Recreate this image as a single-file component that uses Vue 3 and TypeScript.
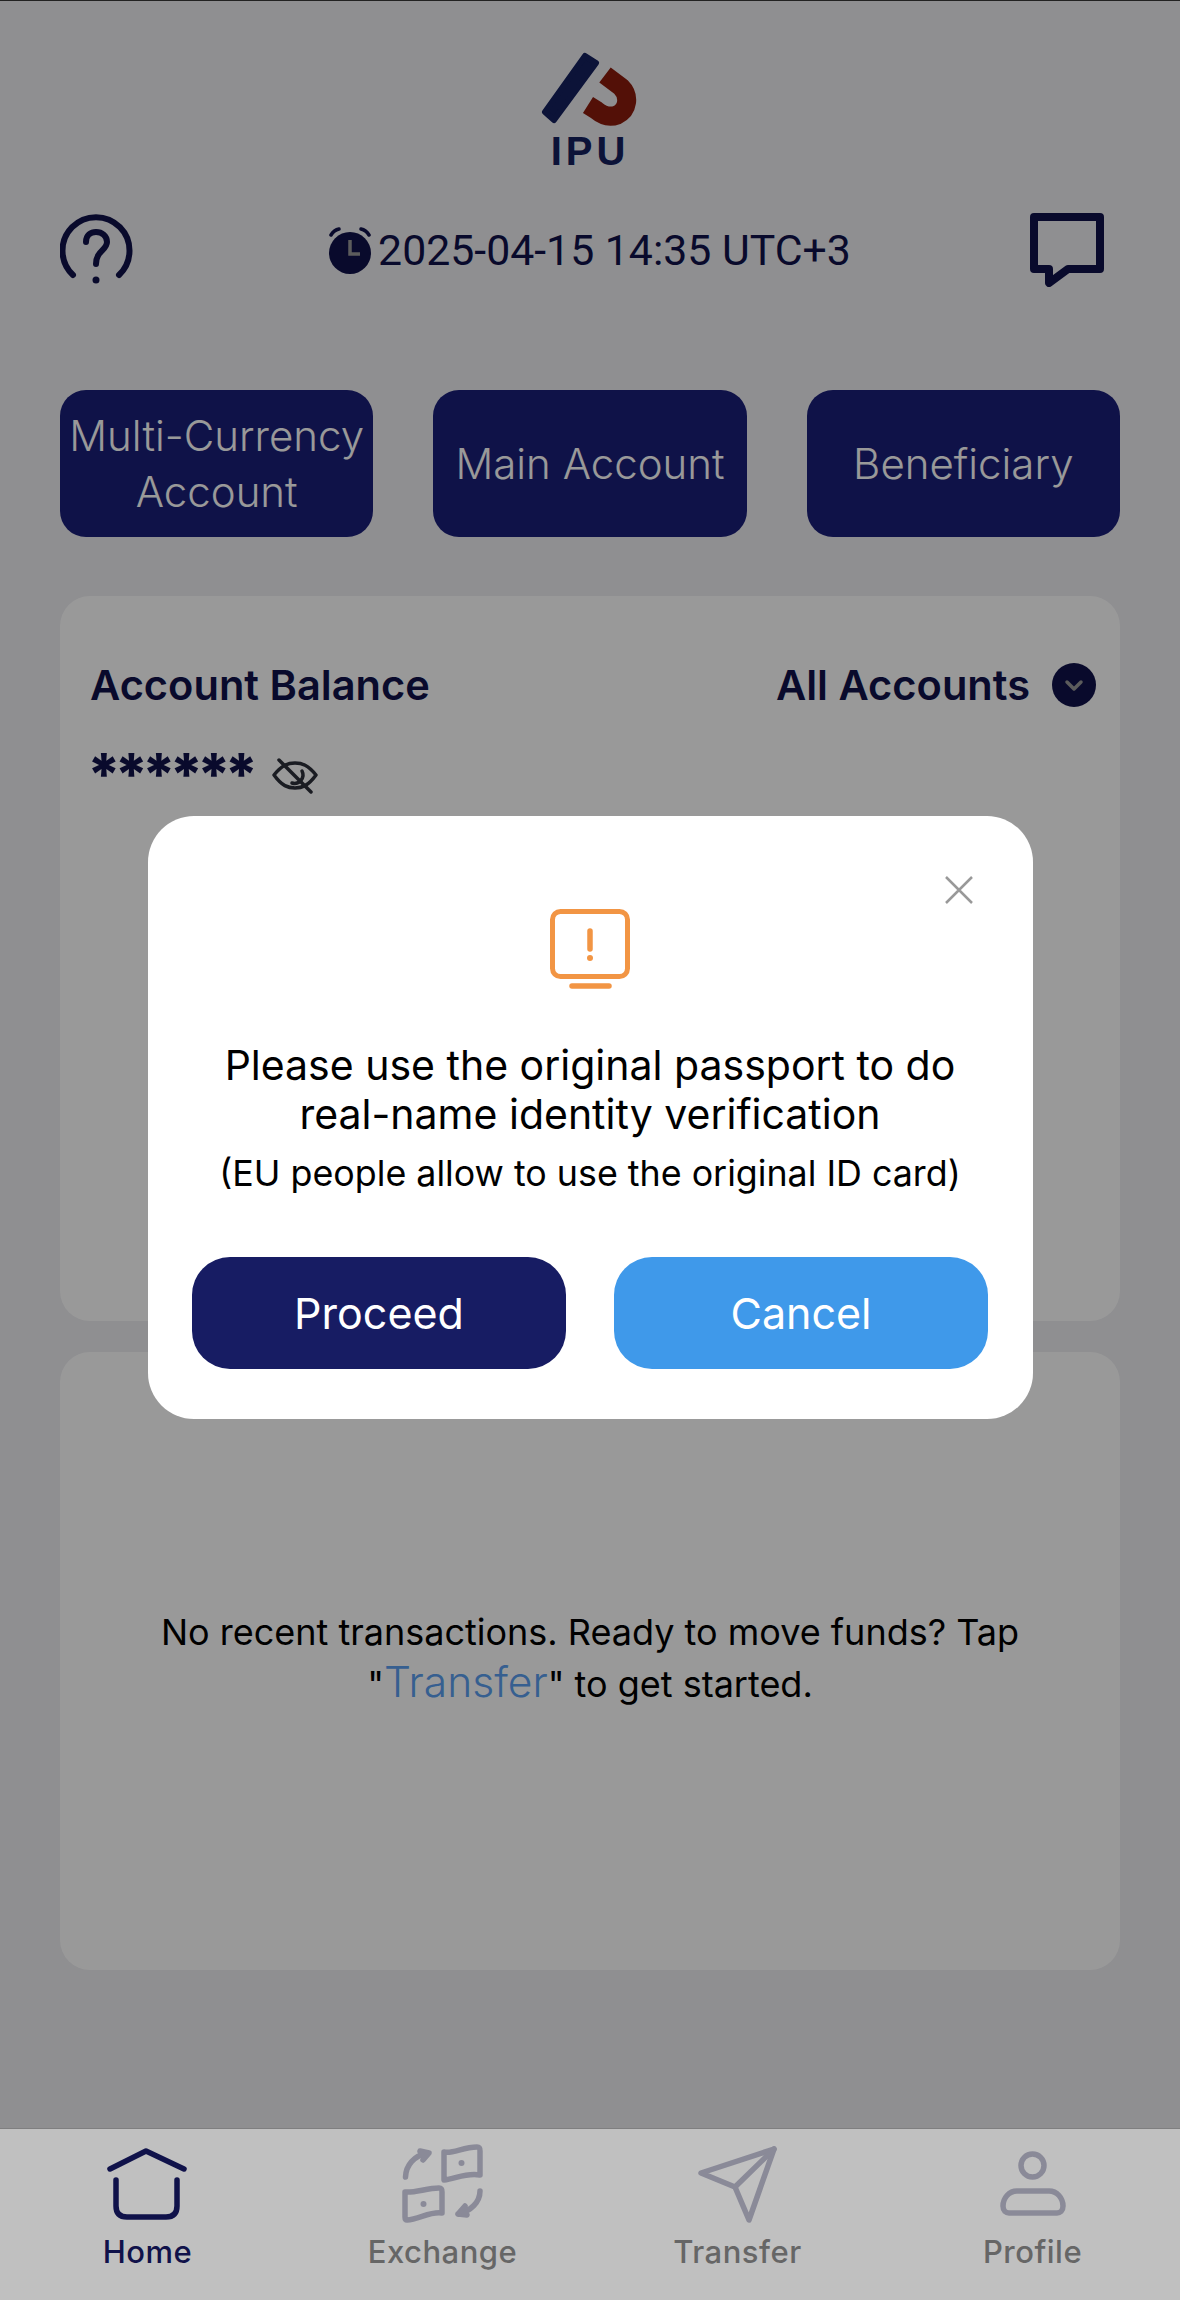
<template>
  <div class="screen">
    <header class="logo">
      <svg class="logo__mark" width="100" height="76" viewBox="0 0 100 76" aria-hidden="true">
        <polygon points="5,62 14,70 56,13 45,6" fill="#14205e" stroke="#14205e" stroke-width="6" stroke-linejoin="round" />
        <path d="M65 25 L81 37 C90 46 88 60 77 65 C69 68 62 65 56 60 L48 55" fill="none" stroke="#8a1c0c" stroke-width="19" stroke-linejoin="round" />
      </svg>
      <span class="logo__name">IPU</span>
    </header>

    <section class="status">
      <svg width="73" height="72" viewBox="0 0 73 72" fill="none" stroke="#10124a" stroke-width="6" stroke-linecap="round" aria-hidden="true">
        <path d="M13 61 A33.5 33.5 0 1 1 59 61" />
        <path d="M26 28 C26 21 31 18 36 18 C42 18 47 22 47 28 C47 36 36 37 36 50" />
        <circle cx="36" cy="66" r="3.5" fill="#10124a" stroke="none" />
      </svg>
      <div class="status__time">
        <svg width="44" height="47" viewBox="0 0 44 47" aria-hidden="true">
          <circle cx="22" cy="26" r="21" fill="#10124a" />
          <path d="M3 8 Q6 3 11 2 M41 8 Q38 3 33 2" fill="none" stroke="#10124a" stroke-width="3.5" stroke-linecap="round" />
          <path d="M22 13 V27 H32" fill="none" stroke="#999" stroke-width="3.5" />
        </svg>
        <span>2025-04-15 14:35 UTC+3</span>
      </div>
      <svg width="74" height="74" viewBox="0 0 74 74" fill="none" aria-hidden="true">
        <path d="M4 4 H70 V56 H38 L19 70 V56 H4 Z" stroke="#10124a" stroke-width="8" stroke-linejoin="round" />
      </svg>
    </section>

    <nav class="quick">
      <button v-for="item in quickLinks" :key="item" type="button" class="quick__btn">{{ item }}</button>
    </nav>

    <section class="card balance">
      <div class="balance__head">
        <h2>Account Balance</h2>
        <div class="balance__filter">
          <span>All Accounts</span>
          <svg width="44" height="44" viewBox="0 0 44 44" aria-hidden="true">
            <circle cx="22" cy="22" r="22" fill="#10124a" />
            <path d="M15 19 L22 26 L29 19" fill="none" stroke="#999" stroke-width="3.5" stroke-linecap="round" stroke-linejoin="round" />
          </svg>
        </div>
      </div>
      <div class="balance__value">
        <span class="balance__stars">******</span>
        <svg class="balance__eye" width="46" height="36" viewBox="0 0 46 36" fill="none" stroke="#2c2f3a" stroke-width="3.5" stroke-linecap="round" stroke-linejoin="round" aria-hidden="true">
          <path d="M2 17 C10 7 16 5 23 5 C30 5 36 7 44 17 C36 28 30 30 23 30 C16 30 10 28 2 17 Z" />
          <path d="M30 13 A8.5 8.5 0 0 1 20 25" />
          <path d="M7 2 L39 34" />
        </svg>
      </div>
    </section>

    <section class="card empty">
      <p>
        No recent transactions. Ready to move funds? Tap<br />
        "<span class="empty__link">Transfer</span>" to get started.
      </p>
    </section>

    <div class="overlay">
      <div class="modal" role="dialog">
        <svg class="modal__close" width="28" height="28" viewBox="0 0 28 28" aria-hidden="true">
          <path d="M1 1 L27 27 M27 1 L1 27" fill="none" stroke="#999" stroke-width="2.5" />
        </svg>
        <svg class="modal__icon" width="82" height="80" viewBox="0 0 82 80" fill="none" stroke="#f29544" aria-hidden="true">
          <rect x="3.5" y="2.5" width="75" height="65" rx="8" stroke-width="5" />
          <path d="M41 22 V40" stroke-width="5.5" stroke-linecap="round" />
          <circle cx="41" cy="49" r="3" fill="#f29544" stroke="none" />
          <path d="M23 77 H60" stroke-width="5.5" stroke-linecap="round" />
        </svg>
        <h3 class="modal__title">Please use the original passport to do<br />real-name identity verification</h3>
        <p class="modal__sub">(EU people allow to use the original ID card)</p>
        <div class="modal__actions">
          <button type="button" class="modal__btn modal__btn--primary">Proceed</button>
          <button type="button" class="modal__btn modal__btn--cancel">Cancel</button>
        </div>
      </div>
    </div>

    <footer class="tabs">
      <div v-for="tab in tabs" :key="tab.label" class="tabs__item" :class="{ active: tab.label === 'Home' }">
        <svg v-if="tab.label === 'Home'" width="84" height="84" viewBox="0 0 84 84" fill="none" stroke="#10124a" stroke-width="5.5" stroke-linecap="round" stroke-linejoin="round" aria-hidden="true">
          <path d="M4 25 L40 7 L78 25" />
          <path d="M10 36 V62 Q10 73 21 73 H60 Q71 73 71 62 V36" />
        </svg>
        <svg v-else-if="tab.label === 'Exchange'" width="84" height="84" viewBox="0 0 84 84" fill="none" stroke="#8a8a98" stroke-width="5.5" stroke-linecap="round" stroke-linejoin="round" aria-hidden="true">
          <path d="M43 8 C52 10 62 3 76 3 C79 3 79 5 79 7 V31 C66 28 54 35 43 36 Z" />
          <circle cx="60.5" cy="19" r="3" fill="#8a8a98" stroke="none" />
          <path d="M4 48 C14 49 26 44 38 44 C41 44 41 46 41 48 V69 C30 67 18 75 6 76 C4 76 4 75 4 73 Z" />
          <circle cx="22.5" cy="60" r="3" fill="#8a8a98" stroke="none" />
          <path d="M4.5 33 C5 21 13 12 26 9 M19 7 L28 9 L22 16" />
          <path d="M79 47 C79 58 70 67 57 70 M57 70 L64 62 M57 70 L66 71" />
        </svg>
        <svg v-else-if="tab.label === 'Transfer'" width="84" height="84" viewBox="0 0 84 84" fill="none" stroke="#8a8a98" stroke-width="5.5" stroke-linecap="round" stroke-linejoin="round" aria-hidden="true">
          <path d="M78 5 L53 76 L39 43 L5 29 Z" />
          <path d="M39 43 L78 5" />
        </svg>
        <svg v-else width="84" height="84" viewBox="0 0 84 84" fill="none" stroke="#8a8a98" stroke-width="5.5" aria-hidden="true">
          <ellipse cx="41.5" cy="21.5" rx="11.5" ry="11.5" />
          <path d="M26 47 H58 C66 47 72 54 72 62 C72 67 69 69 66 69 H18 C15 69 12 67 12 62 C12 54 18 47 26 47 Z" />
        </svg>
        <span>{{ tab.label }}</span>
      </div>
    </footer>
  </div>
</template>

<script setup lang="ts">
const quickLinks = ['Multi-Currency Account', 'Main Account', 'Beneficiary'];
const tabs = [{ label: 'Home' }, { label: 'Exchange' }, { label: 'Transfer' }, { label: 'Profile' }];
</script>

<style scoped>
.screen {
  position: relative;
  display: flex;
  flex-direction: column;
  width: 1180px;
  height: 2300px;
  overflow: hidden;
  box-sizing: border-box;
  background: #eeeef2;
  border-top: 1px solid #222;
  font-family: Inter, "Noto Sans", sans-serif;
}

.logo {
  display: flex;
  flex-direction: column;
  align-items: center;
  padding-top: 49px;
}

.logo__mark {
  display: block;
}

.logo__name {
  margin-top: 8px;
  color: #14205e;
  font-family: "Liberation Sans", sans-serif;
  font-size: 40px;
  font-weight: 700;
  line-height: 34px;
  letter-spacing: 4px;
}

.status {
  display: flex;
  align-items: center;
  justify-content: space-between;
  margin-top: 45px;
  padding: 0 76px 0 60px;
}

.status__time {
  display: flex;
  align-items: center;
  gap: 6px;
  margin-left: 16px;
  color: #10124a;
  font-family: Roboto, sans-serif;
  font-size: 42.8px;
  font-weight: 400;
}

.quick {
  display: grid;
  grid-template-columns: repeat(3, 1fr);
  gap: 60px;
  margin-top: 103px;
  padding: 0 60px;
}

.quick__btn {
  height: 147px;
  padding: 0;
  border: 0;
  border-radius: 26px;
  background: #1a1e78;
  color: #fff;
  font: 300 42px/56px Inter, sans-serif;
}

.card {
  margin: 0 60px;
  border-radius: 30px;
  background: #fff;
}

.balance {
  box-sizing: border-box;
  height: 725px;
  margin-top: 59px;
  padding: 64px 24px 0 30px;
}

.balance__head {
  display: flex;
  align-items: center;
  justify-content: space-between;
  color: #10124a;
}

.balance__head h2 {
  margin: 0;
  font-size: 41.6px;
  font-weight: 600;
}

.balance__filter {
  display: flex;
  align-items: center;
  gap: 22px;
  font-size: 41.6px;
  font-weight: 600;
}

.balance__value {
  display: flex;
  align-items: flex-start;
  gap: 20px;
  margin-top: 34px;
}

.balance__stars {
  margin-left: -3px;
  color: #10124a;
  font-size: 58px;
  font-weight: 800;
  line-height: 60px;
  letter-spacing: -6.3px;
}

.balance__eye {
  margin-top: 14px;
}

.empty {
  display: flex;
  align-items: center;
  justify-content: center;
  box-sizing: border-box;
  height: 618px;
  margin-top: 31px;
  padding-bottom: 6px;
  text-align: center;
}

.empty p {
  margin: 0;
  color: #000;
  font-size: 36px;
  line-height: 50px;
}

.empty__link {
  color: #5a9ef0;
  font-size: 42.5px;
  font-weight: 300;
}

.overlay {
  position: absolute;
  inset: 0;
  z-index: 5;
  display: flex;
  justify-content: center;
  padding-top: 815px;
  background: rgba(0, 0, 0, 0.4);
}

.modal {
  position: relative;
  display: flex;
  flex-direction: column;
  align-items: center;
  box-sizing: border-box;
  width: 885px;
  height: 603px;
  padding-top: 93px;
  border-radius: 46px;
  background: #fff;
}

.modal__close {
  position: absolute;
  top: 60px;
  right: 60px;
}

.modal__title {
  margin: 52px 0 0;
  color: #000;
  font-size: 41px;
  font-weight: 400;
  line-height: 49px;
  text-align: center;
  white-space: nowrap;
}

.modal__sub {
  margin: 12px 0 0;
  color: #000;
  font-size: 35.8px;
  line-height: 44px;
  white-space: nowrap;
}

.modal__actions {
  display: flex;
  gap: 48px;
  margin-top: 62px;
}

.modal__btn {
  width: 374px;
  height: 112px;
  border: 0;
  border-radius: 38px;
  color: #fff;
  font: 400 43px Inter, sans-serif;
}

.modal__btn--primary {
  background: #171c63;
}

.modal__btn--cancel {
  background: #3f99ea;
}

.tabs {
  position: relative;
  z-index: 6;
  display: grid;
  grid-template-columns: repeat(4, 1fr);
  box-sizing: border-box;
  height: 172px;
  margin-top: auto;
  padding-top: 15px;
  border-top: 1px solid #7f7f80;
  background: #c0c0c0;
}

.tabs__item {
  display: flex;
  flex-direction: column;
  align-items: center;
  color: #666;
  font-size: 31px;
  font-weight: 500;
  letter-spacing: 0.5px;
}

.tabs__item svg {
  display: block;
  flex: none;
}

.tabs__item span {
  margin-top: 6px;
  line-height: 36px;
}

.tabs__item.active {
  color: #10124a;
}
</style>
